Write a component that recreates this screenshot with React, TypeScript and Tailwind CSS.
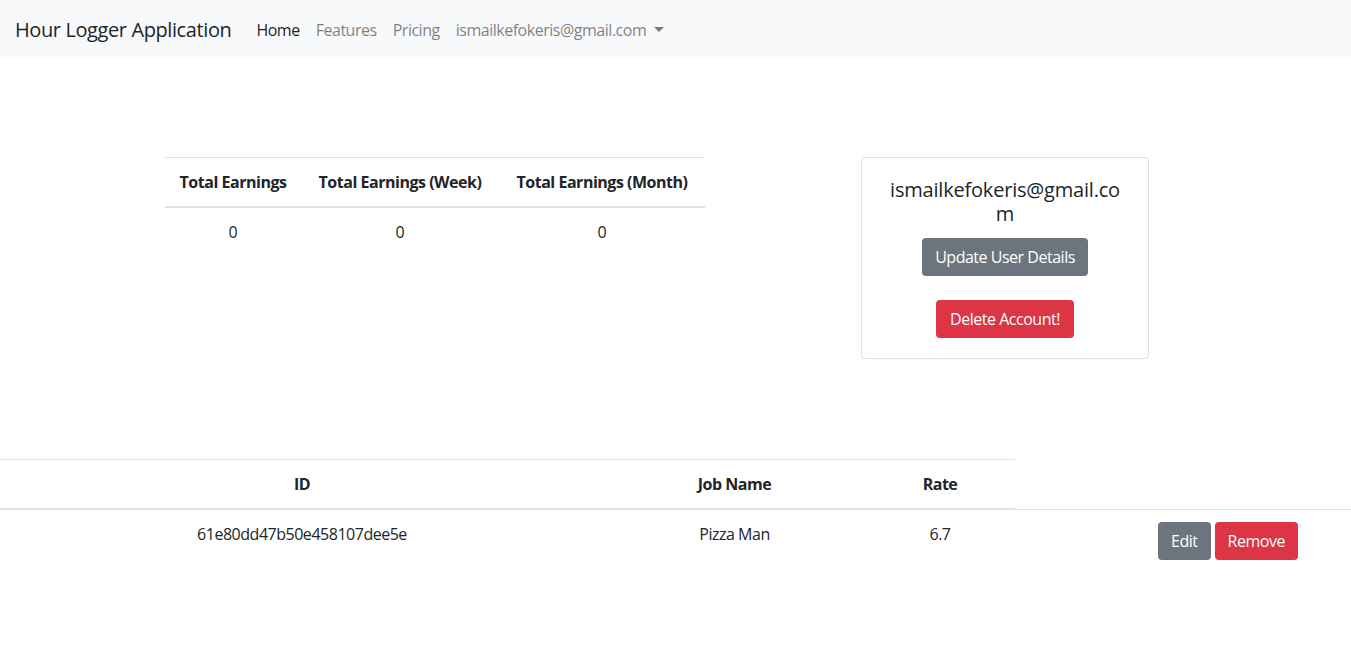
import React from "react";

const font = { fontFamily: '"Open Sans", "Noto Sans", Arial, sans-serif' };

function Navbar() {
  return (
    <nav className="flex h-[57px] items-center bg-[#f8f9fa] px-[15px] pt-[2px]">
      <span className="mr-[17px] text-[20px] leading-[30px] tracking-[-0.02em] text-[#212529]">
        Hour Logger Application
      </span>
      <ul className="flex items-center text-[16px] leading-6 tracking-[-0.03em]">
        <li className="px-2 text-black/90">Home</li>
        <li className="px-2 text-black/50">Features</li>
        <li className="px-2 text-black/50">Pricing</li>
        <li className="flex items-center px-2 text-black/50">
          ismailkefokeris@gmail.com
          <span className="ml-[8px] inline-block h-0 w-0 border-x-[5px] border-t-[5px] border-x-transparent border-t-black/50" />
        </li>
      </ul>
    </nav>
  );
}

function EarningsTable() {
  const heads = [
    ["Total Earnings", "w-[136px]"],
    ["Total Earnings (Week)", "w-[198px]"],
    ["Total Earnings (Month)", "w-[206px]"],
  ];
  return (
    <table className="w-[540px] table-fixed text-center text-[16px] leading-6 text-[#212529]">
      <thead>
        <tr>
          {heads.map(([h, w]) => (
            <th
              key={h}
              className={`${w} whitespace-nowrap border-t border-b-2 border-[#dee2e6] p-3 font-bold tracking-[-0.03em]`}
            >
              {h}
            </th>
          ))}
        </tr>
      </thead>
      <tbody>
        <tr>
          <td className="p-3">0</td>
          <td className="p-3">0</td>
          <td className="p-3">0</td>
        </tr>
      </tbody>
    </table>
  );
}

function UserCard() {
  return (
    <div className="w-[288px] rounded border border-black/[0.125] p-5 text-center">
      <h5 className="mb-3 text-[20px] font-medium leading-6 tracking-[-0.01em] text-[#212529]">
        <span className="block">ismailkefokeris@gmail.co</span>
        <span className="block">m</span>
      </h5>
      <div className="flex flex-col items-center gap-6 tracking-[-0.03em]">
        <button className="h-[38px] rounded bg-[#6c757d] px-[13px] text-[16px] text-white">
          Update User Details
        </button>
        <button className="h-[38px] rounded bg-[#dc3545] px-[14px] text-[16px] text-white">
          Delete Account!
        </button>
      </div>
    </div>
  );
}

function JobsTable() {
  return (
    <table className="w-full text-center text-[16px] leading-6 tracking-[-0.03em] text-[#212529]">
      <thead>
        <tr>
          <th className="w-[604px] border-t border-b-2 border-[#dee2e6] p-3 font-bold">ID</th>
          <th className="w-[261px] border-t border-b-2 border-[#dee2e6] p-3 font-bold">Job Name</th>
          <th className="w-[150px] border-t border-b-2 border-[#dee2e6] p-3 font-bold">Rate</th>
        </tr>
      </thead>
      <tbody>
        <tr>
          <td className="border-t border-[#dee2e6] p-3 align-top">61e80dd47b50e458107dee5e</td>
          <td className="border-t border-[#dee2e6] p-3 align-top">Pizza Man</td>
          <td className="border-t border-[#dee2e6] p-3 align-top">6.7</td>
          <td className="border-t border-[#dee2e6] py-3 pr-[53px]">
            <div className="flex justify-end gap-1">
              <button className="h-[38px] rounded bg-[#6c757d] px-[13px] text-white">Edit</button>
              <button className="h-[38px] rounded bg-[#dc3545] px-[13px] text-white">Remove</button>
            </div>
          </td>
        </tr>
      </tbody>
    </table>
  );
}

export default function App() {
  return (
    <div className="min-h-screen bg-white" style={font}>
      <Navbar />
      <div className="mt-[100px] flex items-start pl-[165px]">
        <EarningsTable />
        <div className="ml-[156px]">
          <UserCard />
        </div>
      </div>
      <div className="mt-[100px]">
        <JobsTable />
      </div>
    </div>
  );
}
